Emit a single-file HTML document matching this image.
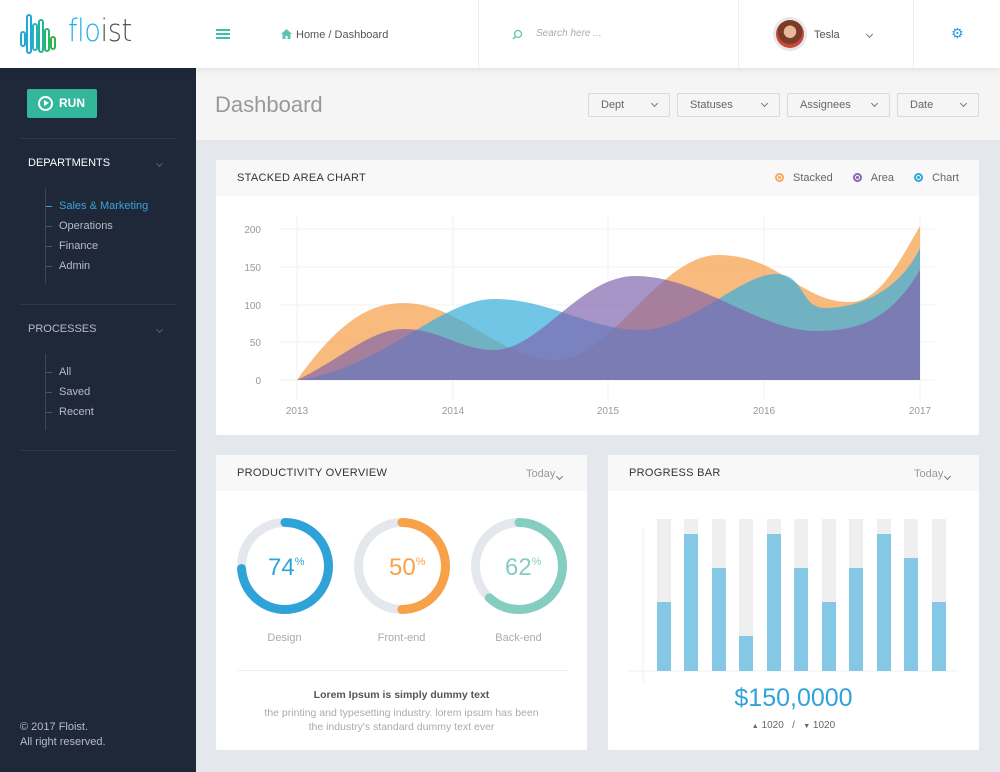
<!DOCTYPE html>
<html><head><meta charset="utf-8"><style>
*{box-sizing:border-box;margin:0;padding:0}
body{width:1000px;height:772px;overflow:hidden;background:#e4e8ec;font-family:"Liberation Sans","DejaVu Sans",sans-serif;position:relative}
.abs{position:absolute}
.hdr{left:0;top:0;width:1000px;height:68px;background:#fff;box-shadow:0 2px 6px rgba(0,0,0,.08);z-index:3}
.side{left:0;top:68px;width:196px;height:704px;background:#1e2838}
.sub{left:196px;top:68px;width:804px;height:72px;background:#f5f5f5}
.card{background:#fff;border-radius:2px}
.ch{height:36px;background:#f8f8f8;font-size:11px;color:#333;letter-spacing:.3px;line-height:36px;padding-left:21px}
.dd{top:93px;height:24px;border:1px solid #d9d9d9;background:#f5f5f5;font-size:11px;color:#666;line-height:22px;padding-left:12px;border-radius:2px}
.dd:after,.chev:after{content:"";position:absolute;right:12px;top:7px;width:4px;height:4px;border-right:1px solid #777;border-bottom:1px solid #777;transform:rotate(45deg)}
.nav{font-size:11px;color:#b7bcc4;position:absolute;left:59px}
.tick{position:absolute;left:46px;width:6px;height:1px;background:#4a5568}
</style></head><body>
<div class="abs hdr">
 <svg class="abs" style="left:20px;top:12px" width="40" height="44" viewBox="0 0 40 44">
  <g fill="none" stroke-width="2" stroke-linecap="round">
   <rect x="1" y="20" width="4" height="14" rx="2" stroke="#1fa9d6"/>
   <rect x="7" y="3" width="4" height="38" rx="2" stroke="#1fa9d6"/>
   <rect x="13" y="12" width="4" height="26" rx="2" stroke="#22b4c4"/>
   <rect x="19" y="8" width="4" height="32" rx="2" stroke="#23b59a"/>
   <rect x="25" y="17" width="4" height="22" rx="2" stroke="#25b86a"/>
   <rect x="31" y="25" width="4" height="12" rx="2" stroke="#2bb54a"/>
  </g></svg>
 <div class="abs" style="left:68px;top:13px;font-size:31px;font-weight:300;color:#1eaef0;letter-spacing:-.5px;font-family:'DejaVu Sans',sans-serif;transform:scaleX(.88);transform-origin:left">flo<span style="color:#555">ist</span></div>
 <div class="abs" style="left:216px;top:29px;width:14px;height:2px;background:#3cc0a8;box-shadow:0 4px 0 #3cc0a8,0 8px 0 #3cc0a8"></div>
 <svg class="abs" style="left:281px;top:29px" width="11" height="10" viewBox="0 0 11 10"><path d="M5.5 0L0 5h1.5v5h3V7h2v3h3V5H11z" fill="#5fc3b0"/></svg>
 <div class="abs" style="left:296px;top:29px;font-size:11px;color:#555">Home / Dashboard</div>
 <div class="abs" style="left:478px;top:0;width:1px;height:68px;background:#eee"></div>
 <svg class="abs" style="left:512px;top:29px" width="11" height="11"><circle cx="6" cy="5" r="3.5" fill="none" stroke="#5fc3b0" stroke-width="1.3"/><path d="M3.5 7.5L1 10" stroke="#5fc3b0" stroke-width="1.5"/></svg>
 <div class="abs" style="left:536px;top:28px;font-size:10px;color:#aaa;font-style:italic">Search here ...</div>
 <div class="abs" style="left:738px;top:0;width:1px;height:68px;background:#eee"></div>
 <div class="abs" style="left:773px;top:17px;width:34px;height:34px;border-radius:50%;background:#e5e8ec;padding:3px"><div style="width:28px;height:28px;border-radius:50%;background:radial-gradient(circle at 50% 42%,#e8b89a 0 28%,#7a3c26 30% 55%,#c64a3a 60%)"></div></div>
 <div class="abs" style="left:814px;top:29px;font-size:11px;color:#555">Tesla</div>
 <div class="abs chev" style="left:860px;top:25px;width:24px;height:20px"></div>
 <div class="abs" style="left:913px;top:0;width:1px;height:68px;background:#eee"></div>
 <div class="abs" style="left:951px;top:25px;font-size:14px;color:#1e9ce0">⚙</div>
</div>
<div class="abs side">
 <div class="abs" style="left:27px;top:21px;width:70px;height:29px;background:#33b79a;border-radius:2px;color:#fff;font-size:12px;font-weight:bold;line-height:29px;padding-left:32px">RUN
  <div class="abs" style="left:11px;top:7px;width:15px;height:15px;border:2px solid #fff;border-radius:50%"></div>
  <div class="abs" style="left:17px;top:11px;width:0;height:0;border-left:5px solid #fff;border-top:3.5px solid transparent;border-bottom:3.5px solid transparent"></div></div>
 <div class="abs" style="left:20px;top:70px;width:156px;height:1px;background:#2c3748"></div>
 <div class="abs" style="left:28px;top:89px;font-size:11px;color:#fff">DEPARTMENTS</div>
 <div class="abs chev" style="left:150px;top:86px;width:24px;height:16px;opacity:.7"></div>
 <div class="abs" style="left:45px;top:120px;width:1px;height:96px;background:#3a4557"></div>
 <div class="tick" style="top:138px;background:#3aa3d8"></div><div class="nav" style="top:132px;color:#3aa3d8">Sales &amp; Marketing</div>
 <div class="tick" style="top:158px"></div><div class="nav" style="top:152px">Operations</div>
 <div class="tick" style="top:178px"></div><div class="nav" style="top:172px">Finance</div>
 <div class="tick" style="top:198px"></div><div class="nav" style="top:192px">Admin</div>
 <div class="abs" style="left:20px;top:236px;width:156px;height:1px;background:#2c3748"></div>
 <div class="abs" style="left:28px;top:255px;font-size:11px;color:#b7bcc4">PROCESSES</div>
 <div class="abs chev" style="left:150px;top:252px;width:24px;height:16px;opacity:.7"></div>
 <div class="abs" style="left:45px;top:286px;width:1px;height:76px;background:#3a4557"></div>
 <div class="tick" style="top:304px"></div><div class="nav" style="top:298px">All</div>
 <div class="tick" style="top:324px"></div><div class="nav" style="top:318px">Saved</div>
 <div class="tick" style="top:344px"></div><div class="nav" style="top:338px">Recent</div>
 <div class="abs" style="left:20px;top:382px;width:156px;height:1px;background:#2c3748"></div>
 <div class="abs" style="left:20px;top:652px;font-size:11px;color:#b7bcc4;line-height:15px">© 2017 Floist.<br>All right reserved.</div>
</div>
<div class="abs sub">
 <div class="abs" style="left:19px;top:24px;font-size:22px;color:#999;font-weight:300">Dashboard</div>
</div>
<div class="abs dd" style="left:588px;width:82px">Dept</div>
<div class="abs dd" style="left:677px;width:103px">Statuses</div>
<div class="abs dd" style="left:787px;width:103px">Assignees</div>
<div class="abs dd" style="left:897px;width:82px">Date</div>

<div class="abs card" style="left:216px;top:160px;width:763px;height:275px">
 <div class="ch">STACKED AREA CHART</div>
 <div class="abs" style="right:20px;top:12px;font-size:11px;color:#666">
  <span style="display:inline-block;width:9px;height:9px;border-radius:50%;border:2px solid #f7a65a;background:radial-gradient(#f7a65a 40%,#fff 45%);vertical-align:-1px;margin-right:9px"></span>Stacked
  <span style="display:inline-block;width:9px;height:9px;border-radius:50%;border:2px solid #8a63b4;background:radial-gradient(#8a63b4 40%,#fff 45%);vertical-align:-1px;margin:0 9px 0 17px"></span>Area
  <span style="display:inline-block;width:9px;height:9px;border-radius:50%;border:2px solid #2fa7de;background:radial-gradient(#2fa7de 40%,#fff 45%);vertical-align:-1px;margin:0 9px 0 17px"></span>Chart
 </div>
</div>
<svg class="abs" style="left:216px;top:196px" width="763" height="239" viewBox="216 196 763 239">
 <g stroke="#f2f2f2" stroke-width="1">
  <path d="M280 229H935M280 267H935M280 305H935M280 342H935M280 380H935M297 216V400M453 216V400M608 216V400M764 216V400M920 216V400"/>
 </g>
 <g font-size="10" fill="#999" font-family="Liberation Sans,sans-serif" text-anchor="end">
  <text x="261" y="233">200</text><text x="261" y="271">150</text><text x="261" y="309">100</text><text x="261" y="346">50</text><text x="261" y="384">0</text>
 </g>
 <g font-size="10" fill="#999" font-family="Liberation Sans,sans-serif" text-anchor="middle">
  <text x="297" y="414">2013</text><text x="453" y="414">2014</text><text x="608" y="414">2015</text><text x="764" y="414">2016</text><text x="920" y="414">2017</text>
 </g>
 <path d="M297 380C340 320 370 303 404 303C460 303 500 360 557 360C610 360 660 255 718 255C780 255 800 302 850 302C880 302 900 260 920 226V380Z" fill="#f7a65a" opacity=".78"/>
 <path d="M297 380C380 370 440 299 494 299C550 299 590 330 640 330C690 330 740 274 776 274C805 274 800 308 825 308C860 308 900 290 920 248V380Z" fill="#3aaedb" opacity=".72"/>
 <path d="M297 380C340 360 370 329 404 329C440 329 460 350 494 350C540 350 580 276 635 276C700 276 760 331 815 331C860 331 890 320 920 270V380Z" fill="#7f63ad" opacity=".68"/>
</svg>

<div class="abs card" style="left:216px;top:455px;width:371px;height:295px">
 <div class="ch">PRODUCTIVITY OVERVIEW</div>
 <div class="abs chev" style="left:310px;top:12px;width:48px;height:16px;line-height:14px;font-size:11px;color:#999">Today</div>
 <svg class="abs" style="left:0;top:55px" width="371" height="110">
  <g fill="none" stroke-width="9" stroke-linecap="round">
   <circle cx="69" cy="56" r="43.5" stroke="#e4e8ec"/>
   <circle cx="69" cy="56" r="43.5" stroke="#2fa3d8" stroke-dasharray="202 300" transform="rotate(-90 69 56)"/>
   <circle cx="186" cy="56" r="43.5" stroke="#e4e8ec"/>
   <circle cx="186" cy="56" r="43.5" stroke="#f9a149" stroke-dasharray="136.6 300" transform="rotate(-90 186 56)"/>
   <circle cx="303" cy="56" r="43.5" stroke="#e4e8ec"/>
   <circle cx="303" cy="56" r="43.5" stroke="#84cdc0" stroke-dasharray="169 300" transform="rotate(-90 303 56)"/>
  </g>
  <g font-family="Liberation Sans,sans-serif" font-size="24">
   <text x="52" y="65" fill="#2fa3d8">74<tspan font-size="11" dy="-10">%</tspan></text>
   <text x="173" y="65" fill="#f9a149">50<tspan font-size="11" dy="-10">%</tspan></text>
   <text x="289" y="65" fill="#84cdc0">62<tspan font-size="11" dy="-10">%</tspan></text>
  </g>
 </svg>
 <div class="abs" style="left:0;top:177px;width:137px;text-align:center;font-size:11px;color:#aaa">Design</div>
 <div class="abs" style="left:117px;top:177px;width:137px;text-align:center;font-size:11px;color:#aaa">Front-end</div>
 <div class="abs" style="left:234px;top:177px;width:137px;text-align:center;font-size:11px;color:#aaa">Back-end</div>
 <div class="abs" style="left:21px;top:215px;width:330px;height:1px;background:#eee"></div>
 <div class="abs" style="left:0;top:234px;width:371px;text-align:center;font-size:10.5px;color:#555;font-weight:bold">Lorem Ipsum is simply dummy text</div>
 <div class="abs" style="left:0;top:251px;width:371px;text-align:center;font-size:10.5px;color:#aaa;line-height:14px">the printing and typesetting industry. lorem ipsum has been<br>the industry's standard dummy text ever</div>
</div>

<div class="abs card" style="left:608px;top:455px;width:371px;height:295px">
 <div class="ch">PROGRESS BAR</div>
 <div class="abs chev" style="left:306px;top:12px;width:48px;height:16px;line-height:14px;font-size:11px;color:#999">Today</div>
 <svg class="abs" style="left:0;top:0" width="371" height="230">
  <path d="M35 73V228M20 216H350" stroke="#f0f0f0"/>
  <g fill="#efefef">
   <rect x="49" y="64" width="14" height="152"/><rect x="76" y="64" width="14" height="152"/><rect x="104" y="64" width="14" height="152"/><rect x="131" y="64" width="14" height="152"/><rect x="159" y="64" width="14" height="152"/><rect x="186" y="64" width="14" height="152"/><rect x="214" y="64" width="14" height="152"/><rect x="241" y="64" width="14" height="152"/><rect x="269" y="64" width="14" height="152"/><rect x="296" y="64" width="14" height="152"/><rect x="324" y="64" width="14" height="152"/>
  </g>
  <g fill="#84c8e6">
   <rect x="49" y="147" width="14" height="69"/><rect x="76" y="79" width="14" height="137"/><rect x="104" y="113" width="14" height="103"/><rect x="131" y="181" width="14" height="35"/><rect x="159" y="79" width="14" height="137"/><rect x="186" y="113" width="14" height="103"/><rect x="214" y="147" width="14" height="69"/><rect x="241" y="113" width="14" height="103"/><rect x="269" y="79" width="14" height="137"/><rect x="296" y="103" width="14" height="113"/><rect x="324" y="147" width="14" height="69"/>
  </g>
 </svg>
 <div class="abs" style="left:0;top:229px;width:371px;text-align:center;font-size:25px;color:#2fa3d8">$150,0000</div>
 <div class="abs" style="left:0;top:265px;width:371px;text-align:center;font-size:10px;color:#666"><span style="font-size:7px">▲</span> 1020 &nbsp; / &nbsp; <span style="font-size:7px">▼</span> 1020</div>
</div>
</body></html>
